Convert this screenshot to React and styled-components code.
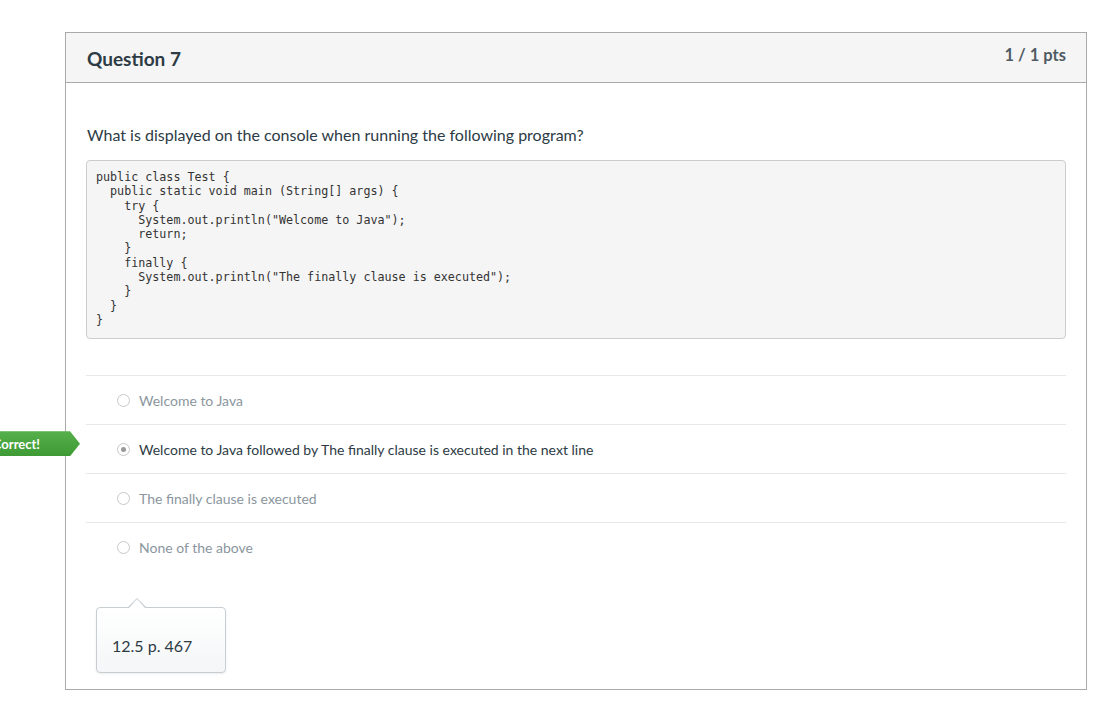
import React from 'react';
import styled, { createGlobalStyle } from 'styled-components';

const GlobalStyle = createGlobalStyle`
  html, body {
    margin: 0;
    padding: 0;
    background: #fff;
  }
  body {
    font-family: Lato, "Noto Sans", "Liberation Sans", sans-serif;
    color: #2d3b45;
  }
`;

const Page = styled.div`
  padding: 32px 0 20px 65px;
  overflow: hidden;
`;

const Card = styled.div`
  width: 1020px;
  border: 1px solid #aaa;
  background: #fff;
`;

const Header = styled.div`
  height: 49px;
  display: flex;
  align-items: center;
  justify-content: space-between;
  padding: 0 20px 0 21px;
  background: #f5f5f5;
  border-bottom: 1px solid #aaa;
`;

const Title = styled.h2`
  margin: 1px 0 0;
  font-size: 19px;
  font-weight: 700;
  color: #2d3b45;
`;

const Points = styled.div`
  font-size: 16.5px;
  font-weight: 700;
  color: #4f5b63;
  margin-top: -5px;
`;

const Body = styled.div`
  padding: 42px 20px 16px 21px;
`;

const QuestionText = styled.p`
  margin: 0 0 15px;
  font-size: 16px;
  line-height: 20px;
`;

const Code = styled.pre`
  margin: 0 0 0 -1px;
  padding: 9px 9px 11px;
  background: #f5f5f5;
  border: 1px solid #ccc;
  border-radius: 4px;
  font-family: "DejaVu Sans Mono", "Liberation Mono", monospace;
  font-size: 11.7px;
  line-height: 14.3px;
  color: #333;
`;

const Answers = styled.div`
  margin: 36px 0 0 -1px;
`;

const AnswerRow = styled.div`
  position: relative;
  height: 48px;
  display: flex;
  align-items: center;
  padding-left: 31px;
  border-top: 1px solid #e8e8e8;
  font-size: 14px;
  color: ${(p) => (p.selected ? '#2d3b45' : '#8b969e')};
`;

const Radio = styled.span`
  box-sizing: border-box;
  width: 13px;
  height: 13px;
  border-radius: 50%;
  border: 1px solid #c8c8c8;
  background: #fff;
  margin-right: 9px;
  display: flex;
  align-items: center;
  justify-content: center;

  &::after {
    content: '';
    display: ${(p) => (p.checked ? 'block' : 'none')};
    width: 5px;
    height: 5px;
    border-radius: 50%;
    background: #9a9a9a;
  }
`;

const CorrectBadge = styled.div`
  position: absolute;
  right: calc(100% + 6px);
  top: 6px;
  height: 25px;
  display: flex;
  align-items: center;
  padding: 0 40px 0 14px;
  background: linear-gradient(#56b04b, #3e9a34);
  color: #fff;
  font-size: 13px;
  font-weight: 700;
  white-space: nowrap;
  clip-path: polygon(0 0, calc(100% - 10px) 0, 100% 50%, calc(100% - 10px) 100%, 0 100%);
`;

const Comment = styled.div`
  position: relative;
  box-sizing: border-box;
  width: 130px;
  height: 66px;
  margin: 36px 0 0 9px;
  padding: 28px 0 0 15px;
  border: 1px solid #c7cdd1;
  border-radius: 4px;
  background: linear-gradient(#fff, #f4f6f7);
  box-shadow: 0 1px 2px rgba(0, 0, 0, 0.08);
  font-size: 16px;
  color: #2d3b45;

  &::before,
  &::after {
    content: '';
    position: absolute;
    left: 31px;
    width: 0;
    height: 0;
    border-left: 9px solid transparent;
    border-right: 9px solid transparent;
  }
  &::before {
    top: -10px;
    border-bottom: 9px solid #c7cdd1;
  }
  &::after {
    top: -9px;
    left: 32px;
    border-left-width: 8px;
    border-right-width: 8px;
    border-bottom: 9px solid #fff;
  }
`;

const code = `public class Test {
  public static void main (String[] args) {
    try {
      System.out.println("Welcome to Java");
      return;
    }
    finally {
      System.out.println("The finally clause is executed");
    }
  }
}`;

const answers = [
  { text: 'Welcome to Java' },
  {
    text: 'Welcome to Java followed by The finally clause is executed in the next line',
    selected: true,
    correct: true,
  },
  { text: 'The finally clause is executed' },
  { text: 'None of the above' },
];

export default function App() {
  return (
    <>
      <GlobalStyle />
      <Page>
        <Card>
          <Header>
            <Title>Question 7</Title>
            <Points>1 / 1 pts</Points>
          </Header>
          <Body>
            <QuestionText>
              What is displayed on the console when running the following program?
            </QuestionText>
            <Code>{code}</Code>
            <Answers>
              {answers.map((a) => (
                <AnswerRow key={a.text} selected={a.selected}>
                  {a.correct && <CorrectBadge>Correct!</CorrectBadge>}
                  <Radio checked={a.selected} />
                  {a.text}
                </AnswerRow>
              ))}
            </Answers>
            <Comment>12.5 p. 467</Comment>
          </Body>
        </Card>
      </Page>
    </>
  );
}
